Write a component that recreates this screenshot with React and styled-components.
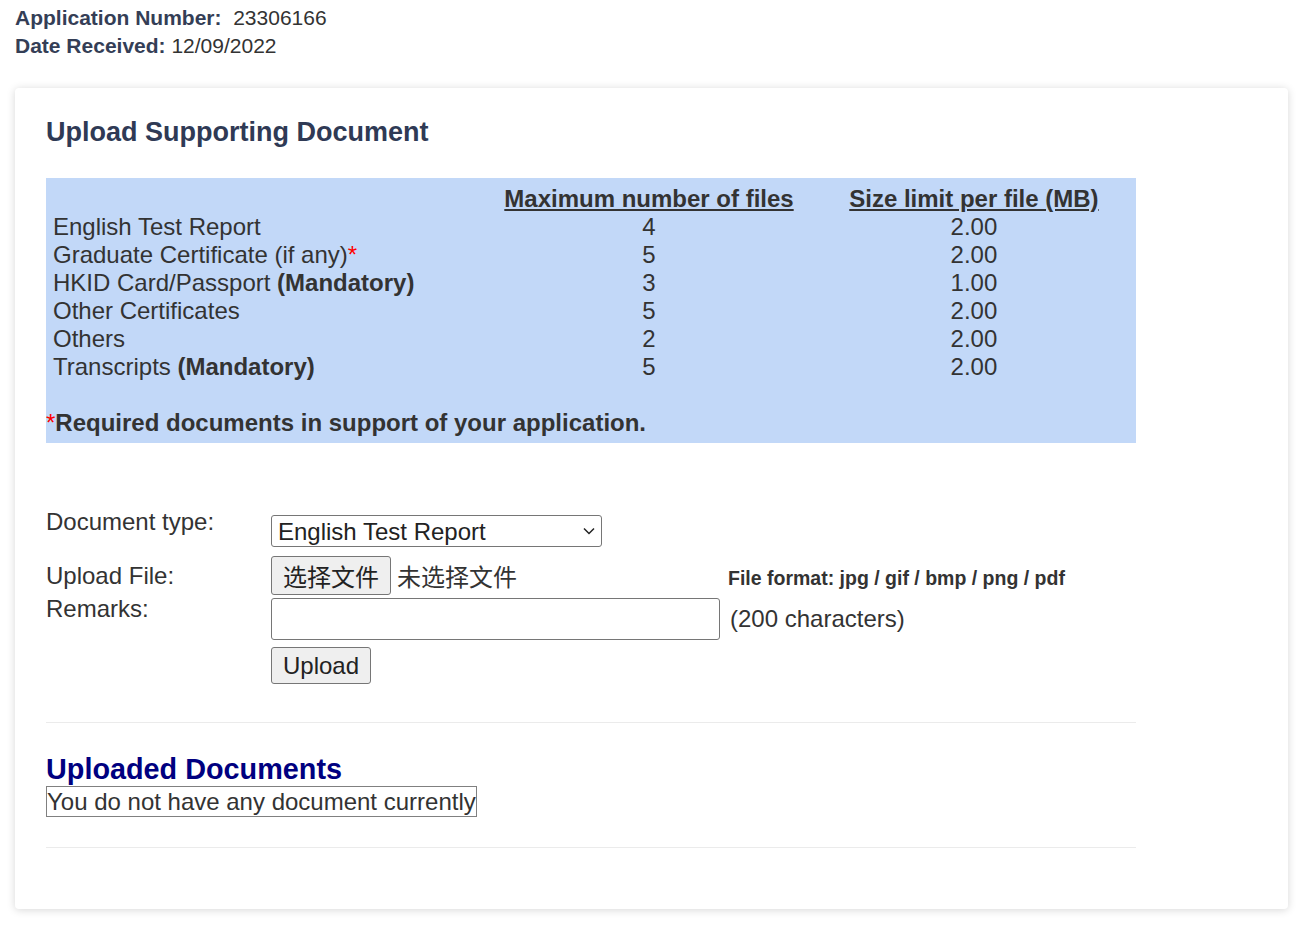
import React from 'react'
import styled, { createGlobalStyle } from 'styled-components'

const GlobalStyle = createGlobalStyle`
    body {
        margin: 0;
        background: #ffffff;
        font-family: "Liberation Sans", Arial, "Noto Sans CJK SC", sans-serif;
        color: #333333;
    }
`

const Header = styled.div`
    padding: 4px 15px 0;
`

const InfoLine = styled.div`
    font-size: 21px;
    line-height: 28px;
    color: #333333;

    b {
        color: #343e56;
    }
`

const Card = styled.div`
    margin: 28px 17px 16px 15px;
    padding: 29px 31px 61px;
    background: #ffffff;
    border-radius: 4px;
    box-shadow: 0 1px 8px rgba(0, 0, 0, 0.16);
`

const Title = styled.h2`
    margin: 0 0 30px;
    font-size: 27px;
    line-height: 31px;
    font-weight: 700;
    color: #2f3a55;
`

const Content = styled.div`
    width: 90%;
`

const InfoBox = styled.div`
    background: #c2d8f8;
    padding: 7px 0 6px;
    font-size: 24px;
    line-height: 28px;
    color: #333333;
`

const LimitsGrid = styled.div`
    display: grid;
    grid-template-columns: 440px 326px 1fr;
`

const Cell = styled.div`
    padding-left: ${p => (p.$center ? '0' : '7px')};
    text-align: ${p => (p.$center ? 'center' : 'left')};
    font-weight: ${p => (p.$head ? 700 : 400)};
    text-decoration: ${p => (p.$head ? 'underline' : 'none')};
    white-space: nowrap;
`

const Star = styled.span`
    color: #ff0000;
    font-weight: 400;
`

const Note = styled.div`
    margin-top: 28px;
    font-weight: 700;
`

const Form = styled.div`
    margin-top: 65px;
`

const FormRow = styled.div`
    display: grid;
    grid-template-columns: 225px 457px 1fr;
    align-items: ${p => p.$align || 'start'};
    margin-top: ${p => p.$mt || 0}px;
    font-size: 24px;
    line-height: 28px;
    color: #333333;
`

const SelectWrap = styled.div`
    position: relative;
    width: 331px;
    margin-top: 7px;

    svg {
        position: absolute;
        right: 7px;
        top: 12px;
        pointer-events: none;
    }
`

const Select = styled.select`
    appearance: none;
    display: block;
    width: 331px;
    height: 32px;
    padding: 0 4px 0 6px;
    font-family: "Liberation Sans", Arial, sans-serif;
    font-size: 24px;
    color: #222222;
    background: #ffffff;
    border: 1px solid #767676;
    border-radius: 3px;
`

const FilePicker = styled.div`
    display: flex;
    align-items: center;
    gap: 6px;
    font-family: "Noto Sans CJK SC", sans-serif;
`

const Button = styled.button`
    height: ${p => p.$h || 37}px;
    padding: 0 11px;
    font-family: ${p => (p.$cjk ? '"Noto Sans CJK SC", sans-serif' : '"Liberation Sans", Arial, sans-serif')};
    font-size: 24px;
    line-height: 1;
    color: #222222;
    background: #efefef;
    border: 1px solid #767676;
    border-radius: 3px;
`

const Hint = styled.span`
    margin-top: 4px;
    font-size: 19.5px;
    font-weight: 700;
    color: #333333;
    white-space: nowrap;
`

const RemarksInput = styled.input`
    margin-top: 3px;
    box-sizing: border-box;
    width: 449px;
    height: 42px;
    border: 1px solid #767676;
    border-radius: 3px;
    font-size: 20px;
`

const Aside = styled.span`
    padding-left: 2px;
    align-self: center;
    margin-top: 3px;
    white-space: nowrap;
`

const Divider = styled.hr`
    margin: ${p => p.$mt}px 0 0;
    border: 0;
    border-top: 1px solid #ebebeb;
`

const SubTitle = styled.h3`
    margin: 30px 0 0;
    font-size: 28.8px;
    line-height: 33px;
    font-weight: 700;
    color: #000080;
`

const EmptyBox = styled.div`
    display: inline-block;
    border: 1px solid #808080;
    font-size: 24px;
    line-height: 29px;
    color: #333333;
`

const limits = [
    { name: 'English Test Report', files: 4, size: '2.00' },
    { name: 'Graduate Certificate (if any)', star: true, files: 5, size: '2.00' },
    { name: 'HKID Card/Passport', mandatory: true, files: 3, size: '1.00' },
    { name: 'Other Certificates', files: 5, size: '2.00' },
    { name: 'Others', files: 2, size: '2.00' },
    { name: 'Transcripts', mandatory: true, files: 5, size: '2.00' },
]

const App = () => {
    return (
        <>
            <GlobalStyle />
            <Header>
                <InfoLine><b>Application Number:</b>&nbsp; 23306166</InfoLine>
                <InfoLine><b>Date Received:</b> 12/09/2022</InfoLine>
            </Header>
            <Card>
                <Title>Upload Supporting Document</Title>
                <Content>
                    <InfoBox>
                        <LimitsGrid>
                            <Cell />
                            <Cell $center $head>Maximum number of files</Cell>
                            <Cell $center $head>Size limit per file (MB)</Cell>
                            {limits.map(row => (
                                <React.Fragment key={row.name}>
                                    <Cell>
                                        {row.name}
                                        {row.star && <Star>*</Star>}
                                        {row.mandatory && <> <b>(Mandatory)</b></>}
                                    </Cell>
                                    <Cell $center>{row.files}</Cell>
                                    <Cell $center>{row.size}</Cell>
                                </React.Fragment>
                            ))}
                        </LimitsGrid>
                        <Note><Star>*</Star>Required documents in support of your application.</Note>
                    </InfoBox>

                    <Form>
                        <FormRow>
                            <span>Document type:</span>
                            <SelectWrap>
                                <Select defaultValue="English Test Report">
                                    {limits.map(row => (
                                        <option key={row.name}>{row.name}</option>
                                    ))}
                                </Select>
                                <svg width="12" height="8" viewBox="0 0 12 8">
                                    <path d="M1 1.5 L6 6.5 L11 1.5" fill="none" stroke="#222" strokeWidth="1.5" />
                                </svg>
                            </SelectWrap>
                        </FormRow>
                        <FormRow $align="center" $mt={9}>
                            <span>Upload File:</span>
                            <FilePicker>
                                <Button $cjk $h={39}>选择文件</Button>
                                <span>未选择文件</span>
                            </FilePicker>
                            <Hint>File format: jpg / gif / bmp / png / pdf</Hint>
                        </FormRow>
                        <FormRow>
                            <span>Remarks:</span>
                            <div>
                                <RemarksInput type="text" />
                            </div>
                            <Aside>(200 characters)</Aside>
                        </FormRow>
                        <FormRow $mt={7}>
                            <span />
                            <div>
                                <Button>Upload</Button>
                            </div>
                        </FormRow>
                    </Form>

                    <Divider $mt={38} />
                    <SubTitle>Uploaded Documents</SubTitle>
                    <EmptyBox>You do not have any document currently</EmptyBox>
                    <Divider $mt={30} />
                </Content>
            </Card>
        </>
    )
}

export default App
